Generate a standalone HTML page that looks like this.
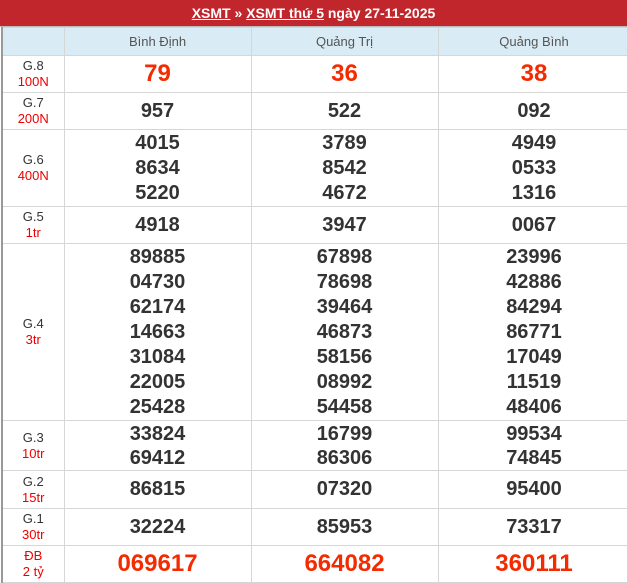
<!DOCTYPE html>
<html><head><meta charset="utf-8"><style>
*{margin:0;padding:0;box-sizing:border-box}
body{width:627px;height:577px;overflow:hidden;background:#fff;font-family:"Liberation Sans",Arial,sans-serif;position:relative}
.hd{position:absolute;left:0;top:0;width:627px;height:27px;background:#c0262b;color:#fff;font-weight:bold;font-size:14px;text-align:center;line-height:26px;border-bottom:1px solid #bbb}
.hd u{text-decoration:underline}
table{position:absolute;left:1px;top:27px;width:628px;border-collapse:collapse;table-layout:fixed}
td{border:1px solid #d6d6d6;text-align:center;vertical-align:middle;color:#333;padding:0}
td:first-child{border-left:2px solid #999}
tr.h td{background:#d9ebf5;color:#555;font-size:13px;height:28px}
td.l{font-size:13px;line-height:16px}
td.l span{color:#e00}
td.n{font-size:20px;font-weight:bold;line-height:25px}
tr.g3 td.n{line-height:24px}
td.r{color:#f32b00;font-size:24px;font-weight:bold}
</style></head><body>
<div class="hd"><u>XSMT</u> » <u>XSMT thứ 5</u> ngày 27-11-2025</div>
<table>
<col style="width:62px"><col style="width:187px"><col style="width:187px"><col style="width:192px">
<tr class="h"><td></td><td>Bình Định</td><td>Quảng Trị</td><td>Quảng Bình</td></tr>
<tr style="height:37px"><td class="l">G.8<br><span>100N</span></td><td class="r">79</td><td class="r">36</td><td class="r">38</td></tr>
<tr style="height:37px"><td class="l">G.7<br><span>200N</span></td><td class="n">957</td><td class="n">522</td><td class="n">092</td></tr>
<tr style="height:77px"><td class="l">G.6<br><span>400N</span></td><td class="n">4015<br>8634<br>5220</td><td class="n">3789<br>8542<br>4672</td><td class="n">4949<br>0533<br>1316</td></tr>
<tr style="height:37px"><td class="l">G.5<br><span>1tr</span></td><td class="n">4918</td><td class="n">3947</td><td class="n">0067</td></tr>
<tr style="height:177px"><td class="l">G.4<br><span>3tr</span></td><td class="n">89885<br>04730<br>62174<br>14663<br>31084<br>22005<br>25428</td><td class="n">67898<br>78698<br>39464<br>46873<br>58156<br>08992<br>54458</td><td class="n">23996<br>42886<br>84294<br>86771<br>17049<br>11519<br>48406</td></tr>
<tr class="g3" style="height:50px"><td class="l">G.3<br><span>10tr</span></td><td class="n">33824<br>69412</td><td class="n">16799<br>86306</td><td class="n">99534<br>74845</td></tr>
<tr style="height:38px"><td class="l">G.2<br><span>15tr</span></td><td class="n">86815</td><td class="n">07320</td><td class="n">95400</td></tr>
<tr style="height:37px"><td class="l">G.1<br><span>30tr</span></td><td class="n">32224</td><td class="n">85953</td><td class="n">73317</td></tr>
<tr style="height:37px"><td class="l"><span>ĐB<br>2 tỷ</span></td><td class="r">069617</td><td class="r">664082</td><td class="r">360111</td></tr>
</table>
</body></html>
